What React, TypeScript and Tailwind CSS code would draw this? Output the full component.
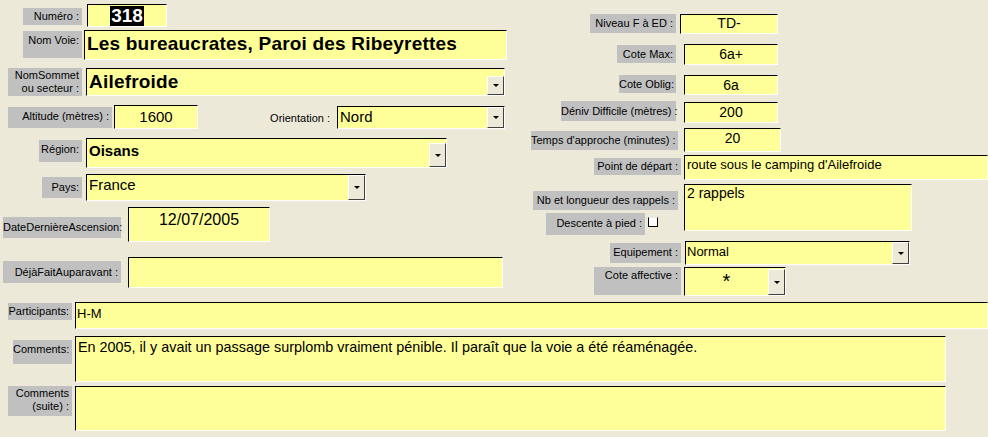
import React from "react";

interface BoxProps {
  className?: string;
  children?: React.ReactNode;
}

const Lbl: React.FC<BoxProps> = ({ className = "", children }) => (
  <div
    className={`shrink-0 bg-[#c0c0c0] text-black text-right pr-[3px] text-[11px] leading-[13px] whitespace-nowrap ${className}`}
  >
    {children}
  </div>
);

interface FieldProps extends BoxProps {
  combo?: string;
}

// sunken yellow text box, optional combo button (combo = height class of the button)
const Field: React.FC<FieldProps> = ({ className = "", children, combo }) => (
  <div
    className={`shrink-0 relative bg-[#ffff99] border border-t-black border-l-black border-b-white border-r-white text-black overflow-hidden whitespace-nowrap ${className}`}
  >
    {children}
    {combo && (
      <div
        className={`absolute right-0 bottom-0 w-[17px] ${combo} bg-[#ece9d8] border border-t-white border-l-white border-b-[#404040] border-r-[#404040] flex items-center justify-center`}
      >
        <div className="w-0 h-0 border-l-[3px] border-r-[3px] border-t-[3px] border-l-transparent border-r-transparent border-t-black" />
      </div>
    )}
  </div>
);

export default function App() {
  return (
    <div className="w-[988px] h-[437px] bg-[#ece9d8] overflow-hidden flex flex-col font-['Liberation_Sans',Arial,sans-serif]">
      <div className="flex h-[302px] shrink-0">
        {/* left column */}
        <div className="w-[528px] shrink-0 flex flex-col">
          <div className="flex items-start mt-[4px] h-[23px]">
            <Lbl className="ml-[23px] mt-[4px] w-[59px] h-[17px] pt-[2px]">Numéro :</Lbl>
            <Field className="ml-[5px] w-[80px] h-[23px] flex justify-center">
              <span className="bg-black text-white font-bold text-[19px] leading-[20px] px-[1px] mt-[1px] h-[20px]">318</span>
            </Field>
          </div>
          <div className="flex items-start mt-[3px] h-[30px]">
            <Lbl className="ml-[23px] mt-[1px] w-[59px] h-[27px] pt-[3px]">Nom Voie:</Lbl>
            <Field className="ml-[2px] w-[423px] h-[30px] pl-[2px] pt-[2px] font-bold text-[19px] tracking-[0.2px] leading-[22px]">
              Les bureaucrates, Paroi des Ribeyrettes
            </Field>
          </div>
          <div className="flex items-start mt-[8px] h-[28px]">
            <Lbl className="ml-[8px] w-[74px] h-[28px] pt-[1px] leading-[12px]">
              NomSommet
              <br />
              ou secteur :
            </Lbl>
            <Field combo="h-[19px]" className="ml-[4px] w-[419px] h-[28px] pl-[2px] pt-[2px] font-bold text-[19px] tracking-[0.2px] leading-[22px]">
              Ailefroide
            </Field>
          </div>
          <div className="flex items-start mt-[9px] h-[24px]">
            <Lbl className="ml-[8px] mt-[2px] w-[104px] h-[21px] pt-[3px]">Altitude (mètres) :</Lbl>
            <Field className="ml-[2px] w-[84px] h-[24px] pt-[2px] text-center text-[15px] leading-[18px]">1600</Field>
            <div className="ml-[70px] mt-[7px] w-[62px] text-right text-[11px] leading-[13px] whitespace-nowrap">Orientation :</div>
            <Field combo="h-[21px]" className="ml-[7px] mt-[1px] w-[168px] h-[23px] pl-[2px] pt-[1px] text-[15px] leading-[18px]">
              Nord
            </Field>
          </div>
          <div className="flex items-start mt-[9px] h-[30px]">
            <Lbl className="ml-[39px] mt-[2px] w-[43px] h-[22px] pt-[3px]">Région:</Lbl>
            <Field combo="h-[24px]" className="ml-[4px] w-[361px] h-[30px] pl-[2px] pt-[3px] font-bold text-[15px] leading-[18px]">
              Oisans
            </Field>
          </div>
          <div className="flex items-start mt-[6px] h-[27px]">
            <Lbl className="ml-[42px] mt-[3px] w-[40px] h-[21px] pt-[4px]">Pays:</Lbl>
            <Field combo="h-[25px]" className="ml-[4px] w-[280px] h-[27px] pl-[2px] pt-[1px] text-[15px] leading-[18px]">
              France
            </Field>
          </div>
          <div className="flex items-start mt-[6px] h-[35px]">
            <Lbl className="ml-[3px] mt-[10px] w-[118px] h-[21px] pt-[4px]">DateDernièreAscension:</Lbl>
            <Field className="ml-[7px] w-[142px] h-[35px] pt-[2px] text-center text-[16px] leading-[19px]">12/07/2005</Field>
          </div>
          <div className="flex items-start mt-[15px] h-[31px]">
            <Lbl className="ml-[3px] mt-[4px] w-[118px] h-[22px] pt-[5px]">DéjàFaitAuparavant :</Lbl>
            <Field className="ml-[7px] w-[375px] h-[31px]" />
          </div>
        </div>

        {/* right column */}
        <div className="flex-1 flex flex-col">
          <div className="flex items-start mt-[14px] h-[20px]">
            <Lbl className="ml-[62px] w-[86px] h-[19px] pt-[3px]">Niveau F à ED :</Lbl>
            <Field className="ml-[4px] w-[98px] h-[20px] text-center text-[14px] leading-[17px]">TD-</Field>
          </div>
          <div className="flex items-start mt-[10px] h-[21px]">
            <Lbl className="ml-[89px] mt-[1px] w-[59px] h-[18px] pt-[3px]">Cote Max:</Lbl>
            <Field className="ml-[8px] w-[94px] h-[21px] pt-[1px] text-center text-[14px] leading-[17px]">6a+</Field>
          </div>
          <div className="flex items-start mt-[10px] h-[20px]">
            <Lbl className="ml-[91px] w-[57px] h-[18px] pt-[3px]">Cote Oblig:</Lbl>
            <Field className="ml-[8px] w-[94px] h-[20px] pt-[1px] text-center text-[14px] leading-[17px]">6a</Field>
          </div>
          <div className="flex items-start mt-[6px] h-[22px]">
            <Lbl className="ml-[33px] w-[115px] h-[20px] pt-[4px]">Déniv Difficile (mètres) :</Lbl>
            <Field className="ml-[8px] mt-[1px] w-[94px] h-[21px] pt-[1px] text-center text-[14px] leading-[17px]">200</Field>
          </div>
          <div className="flex items-start mt-[5px] h-[24px]">
            <Lbl className="ml-[3px] mt-[3px] w-[147px] h-[19px] pt-[3px]">Temps d'approche (minutes) :</Lbl>
            <Field className="ml-[6px] w-[97px] h-[24px] pt-[1px] text-center text-[14px] leading-[17px]">20</Field>
          </div>
          <div className="flex items-start mt-[3px] h-[25px]">
            <Lbl className="ml-[66px] mt-[3px] w-[87px] h-[17px] pt-[2px]">Point de départ :</Lbl>
            <Field className="ml-[3px] w-[304px] h-[25px] pl-[2px] pt-[1px] text-[13px] leading-[16px]">
              route sous le camping d'Ailefroide
            </Field>
          </div>
          <div className="flex items-start mt-[4px] h-[51px]">
            <div className="w-[156px] shrink-0 flex flex-col">
              <Lbl className="ml-[5px] mt-[7px] w-[145px] h-[19px] pt-[3px]">Nb et longueur des rappels :</Lbl>
              <div className="flex items-start mt-[3px]">
                <Lbl className="ml-[18px] w-[99px] h-[22px] pt-[4px]">Descente à pied :</Lbl>
                <div className="ml-[3px] mt-[4px] w-[10px] h-[10px] bg-white border border-t-[#ece9d8] border-l-black border-b-black border-r-black" />
              </div>
            </div>
            <Field className="w-[228px] h-[47px] pl-[2px] text-[14px] leading-[17px]">2 rappels</Field>
          </div>
          <div className="flex items-start mt-[6px] h-[24px]">
            <Lbl className="ml-[82px] mt-[2px] w-[71px] h-[20px] pt-[3px]">Equipement :</Lbl>
            <Field combo="h-[22px]" className="ml-[4px] w-[225px] h-[24px] pl-[1px] pt-[2px] text-[13px] leading-[16px]">
              Normal
            </Field>
          </div>
          <div className="flex items-start mt-[2px] h-[29px]">
            <Lbl className="ml-[66px] w-[87px] h-[28px] pt-[2px]">Cote affective :</Lbl>
            <Field combo="h-[26px]" className="ml-[3px] w-[102px] h-[29px] pr-[17px] pt-[2px] text-center text-[20px] leading-[22px]">
              *
            </Field>
          </div>
        </div>
      </div>

      {/* bottom rows */}
      <div className="flex items-start h-[27px] shrink-0">
        <Lbl className="ml-[8px] mt-[1px] w-[64px] h-[17px] pt-[2px] text-[10px] leading-[12px]">Participants:</Lbl>
        <Field className="ml-[3px] w-[913px] h-[27px] pl-[1px] pt-[3px] text-[13px] leading-[16px]">H-M</Field>
      </div>
      <div className="flex items-start mt-[7px] h-[46px] shrink-0">
        <Lbl className="ml-[13px] mt-[4px] w-[59px] h-[24px] pt-[3px] text-[10px] leading-[12px]">Comments:</Lbl>
        <Field className="ml-[3px] w-[871px] h-[46px] pl-[2px] pt-[2px] text-[14.4px] leading-[17px]">
          En 2005, il y avait un passage surplomb vraiment pénible. Il paraît que la voie a été réaménagée.
        </Field>
      </div>
      <div className="flex items-start mt-[4px] h-[45px] shrink-0">
        <Lbl className="ml-[8px] w-[64px] h-[30px] pt-[1px] text-[11px] leading-[13px]">
          Comments
          <br />
          (suite) :
        </Lbl>
        <Field className="ml-[3px] w-[871px] h-[45px]" />
      </div>
    </div>
  );
}
